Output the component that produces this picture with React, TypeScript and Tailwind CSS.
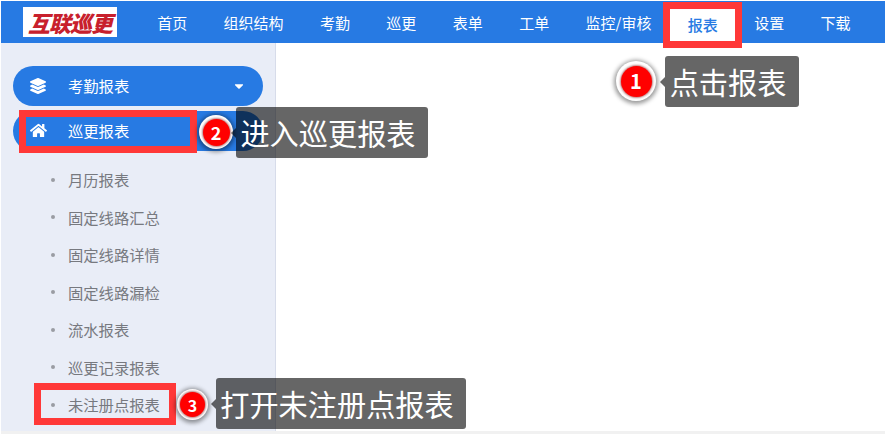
import { FaCaretDown, FaHome, FaLayerGroup } from "react-icons/fa";

const navItems = ["首页", "组织结构", "考勤", "巡更", "表单", "工单", "监控/审核", "报表", "设置", "下载"];
const subItems = ["月历报表", "固定线路汇总", "固定线路详情", "固定线路漏检", "流水报表", "巡更记录报表", "未注册点报表"];

const Badge = ({ n, className, size }: { n: number; className: string; size: string }) => (
  <div className={`absolute flex items-center justify-center rounded-full bg-white shadow-[0_1px_4px_2px_rgba(0,0,0,0.4)] ${className}`}>
    <div className={`flex items-center justify-center rounded-full bg-[#f00] font-bold text-white shadow-[0_0_2px_1px_rgba(120,0,0,0.5)] ${size}`}>{n}</div>
  </div>
);

const Tip = ({ text, className }: { text: string; className: string }) => (
  <div className={`absolute flex h-[51px] items-center justify-center rounded-[3px] bg-black/60 pr-[8px] text-[29.2px] text-white ${className}`}>
    <span className="absolute left-[-5px] top-[21px] h-0 w-0 border-y-[5px] border-r-[5px] border-y-transparent border-r-black/60" />
    {text}
  </div>
);

const App = () => {
  return (
    <div className="relative h-[434px] w-[885px] overflow-hidden bg-white pl-px pt-px font-['Noto_Sans_CJK_SC','Noto_Sans',sans-serif]">
      {/* top bar */}
      <header className="flex h-[42px] items-center bg-[#277ae3] pl-[22px]">
        <div className="flex h-[30px] w-[94px] items-center justify-center overflow-hidden bg-white text-[22px] font-black italic leading-none tracking-[-1px] text-[#c8202c]">
          互联巡更
        </div>
        <nav className="ml-[22px] flex h-full">
          {navItems.map((item) => (
            <div
              key={item}
              className={
                item === "报表"
                  ? "mb-[2px] mt-[8px] flex items-center justify-center bg-white px-[18.2px] text-[15px] font-medium text-[#277ae3]"
                  : "flex items-center justify-center px-[18.2px] pt-[2px] text-[15px] text-white"
              }
            >
              {item}
            </div>
          ))}
        </nav>
      </header>

      <div className="flex h-[388px]">
        {/* sidebar */}
        <aside className="w-[275px] border-r border-[#d7dcea] bg-[#e9edf7] pl-3 pr-3 pt-[23px]">
          <div className="flex h-10 w-[250px] items-center rounded-full bg-[#277ae3] pb-px pl-[17px] pr-[17px] text-[15.3px] text-white">
            <FaLayerGroup className="text-base" />
            <span className="ml-[22px] flex-1">考勤报表</span>
            <FaCaretDown className="text-sm" />
          </div>
          <div className="mt-[5px] flex h-10 w-[250px] items-center rounded-full bg-[#277ae3] pb-px pl-[17px] text-[15.3px] text-white">
            <FaHome className="text-[17px]" />
            <span className="ml-[21px]">巡更报表</span>
          </div>
          <ul className="mt-[10px]">
            {subItems.map((item) => (
              <li key={item} className="flex h-[37.5px] items-center pl-[38px] text-[15.3px] text-[#77797f]">
                <span className="h-1 w-1 rounded-full bg-[#9a9ca3]" />
                <span className="ml-[13px]">{item}</span>
              </li>
            ))}
          </ul>
        </aside>
        <main className="flex-1 bg-white" />
      </div>
      <div className="h-[3px] bg-[#f1f1f1]" />

      {/* annotations */}
      <div className="absolute left-[663px] top-[2px] h-[46px] w-[79px] border-[7px] border-[#ff3838]" />
      <div className="absolute left-[19px] top-[110px] h-[43px] w-[178px] border-[7px] border-[#ff3838]" />
      <div className="absolute left-[34px] top-[383px] h-[42px] w-[142px] border-[7px] border-[#ff3838]" />

      <Badge n={1} className="left-[616px] top-[61px] h-[40px] w-[40px]" size="h-[31px] w-[31px] text-[20px]" />
      <Badge n={2} className="left-[199px] top-[115px] h-[34px] w-[34px]" size="h-[27px] w-[27px] text-[18px]" />
      <Badge n={3} className="left-[177px] top-[389px] h-[31px] w-[31px]" size="h-[25px] w-[25px] text-[16px]" />

      <Tip text="点击报表" className="left-[665px] top-[56px] w-[134px]" />
      <Tip text="进入巡更报表" className="left-[236px] top-[107px] w-[192px]" />
      <Tip text="打开未注册点报表" className="left-[216px] top-[378px] w-[250px]" />
    </div>
  );
};

export default App;
